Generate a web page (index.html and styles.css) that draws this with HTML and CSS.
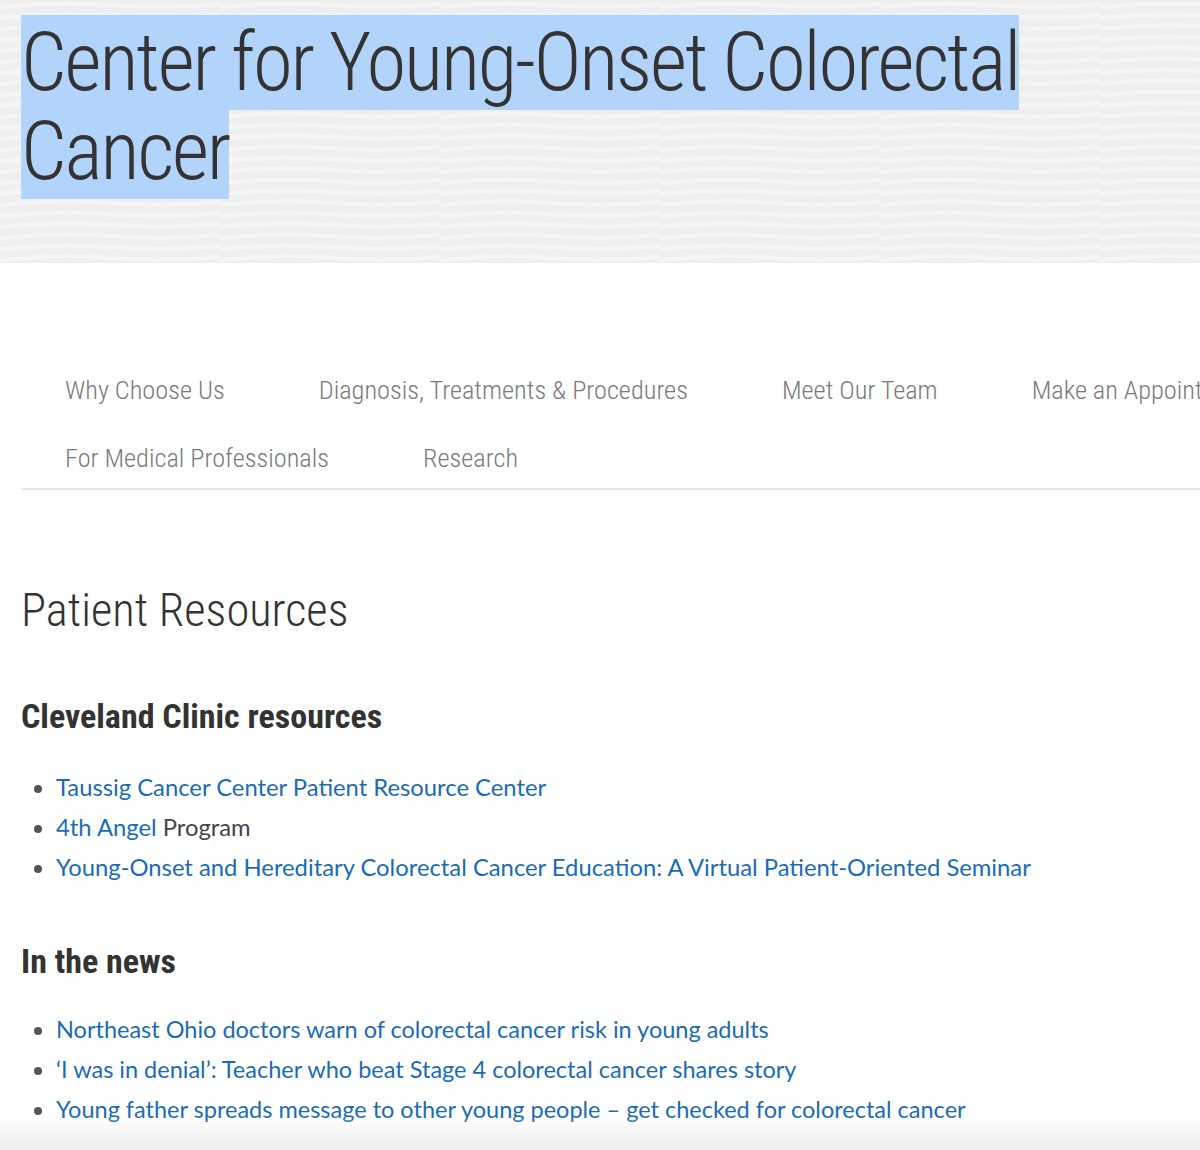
FILE: index.html
```html
<!DOCTYPE html>
<html lang="en">
<head>
    <meta charset="UTF-8">
    <meta name="viewport" content="width=device-width, initial-scale=1.0">
    <title>Center for Young-Onset Colorectal Cancer</title>
    <link rel="stylesheet" href="styles.css">
</head>
<body>

    <header class="hero">
        <h1 class="hero-title"><span class="selected">Center for Young-Onset Colorectal Cancer</span></h1>
    </header>

    <div class="container">
        <nav class="subnav">
            <a href="#">Why Choose Us</a>
            <a href="#">Diagnosis, Treatments &amp; Procedures</a>
            <a href="#">Meet Our Team</a>
            <a href="#">Make an Appointment</a>
            <a href="#">For Medical Professionals</a>
            <a href="#">Research</a>
        </nav>

        <h2>Patient Resources</h2>

        <h3>Cleveland Clinic resources</h3>
        <ul class="links">
            <li><a href="#">Taussig Cancer Center Patient Resource Center</a></li>
            <li><a href="#">4th Angel</a> Program</li>
            <li><a href="#">Young-Onset and Hereditary Colorectal Cancer Education: A Virtual Patient-Oriented Seminar</a></li>
        </ul>

        <h3>In the news</h3>
        <ul class="links news">
            <li><a href="#">Northeast Ohio doctors warn of colorectal cancer risk in young adults</a></li>
            <li><a href="#">&lsquo;I was in denial&rsquo;: Teacher who beat Stage 4 colorectal cancer shares story</a></li>
            <li><a href="#">Young father spreads message to other young people &ndash; get checked for colorectal cancer</a></li>
        </ul>
    </div>

    <div class="bottom-fade"></div>

</body>
</html>
```

FILE: styles.css
```css
html, body { overflow-x: hidden; }
body { margin: 0; font-family: Lato, "Open Sans", sans-serif; color: #444; background: #fff; }

/* light grey banner with faint waves */
.hero { height: 263px; background-color: #efefef; padding: 18px 21px 0; box-sizing: border-box;
  background-image: url("data:image/svg+xml,%3Csvg xmlns='http://www.w3.org/2000/svg' width='220' height='11'%3E%3Cpath d='M0 7 Q55 1 110 5 T220 4' fill='none' stroke='%23fafafa' stroke-width='4' opacity='.7'/%3E%3C/svg%3E"); }
.hero-title { margin: 0; width: 1100px; font-family: "Roboto Condensed", "Liberation Sans Narrow", "DejaVu Sans Condensed", sans-serif;
  font-weight: 300; font-size: 81px; line-height: 89px; color: #333; letter-spacing: -2.2px; }
.selected { background: #b3d4fa; }

.container { padding: 0 0 0 21px; width: 1400px; }

.subnav { display: flex; flex-wrap: wrap; row-gap: 8px; width: 1300px; margin-top: 97px; border-bottom: 2px solid #e8e8e8; }
.subnav a { font-family: "Roboto Condensed", "Liberation Sans Narrow", "DejaVu Sans Condensed", sans-serif; font-weight: 300;
  font-size: 26.3px; line-height: 60px; color: #7a7a7a; text-decoration: none; padding: 0 47px 0 44px; margin-right: 3px; }

h2 { font-family: "Roboto Condensed", "Liberation Sans Narrow", "DejaVu Sans Condensed", sans-serif; font-weight: 300;
  font-size: 46.5px; color: #333; margin: 90px 0 0; line-height: 60px; }
h3 { font-family: "Roboto Condensed", "Liberation Sans Narrow", "DejaVu Sans Condensed", sans-serif; font-weight: 700;
  font-size: 34px; color: #333; margin: 52px 0 0; line-height: 44px; }
h2 + h3 { margin-top: 54px; }

.links { margin: 26px 0 0; padding-left: 35px; font-size: 23.8px; line-height: 40px; }
.links.news { font-size: 23.5px; }
h2 + h3 + .links { margin-top: 29px; }
.links li::marker { color: #555; }
.links a { color: #1a6cb4; text-decoration: none; }

.bottom-fade { position: fixed; left: 0; right: 0; bottom: 0; height: 34px;
  background: linear-gradient(rgba(240,240,240,0), #ececec); pointer-events: none; }
```
